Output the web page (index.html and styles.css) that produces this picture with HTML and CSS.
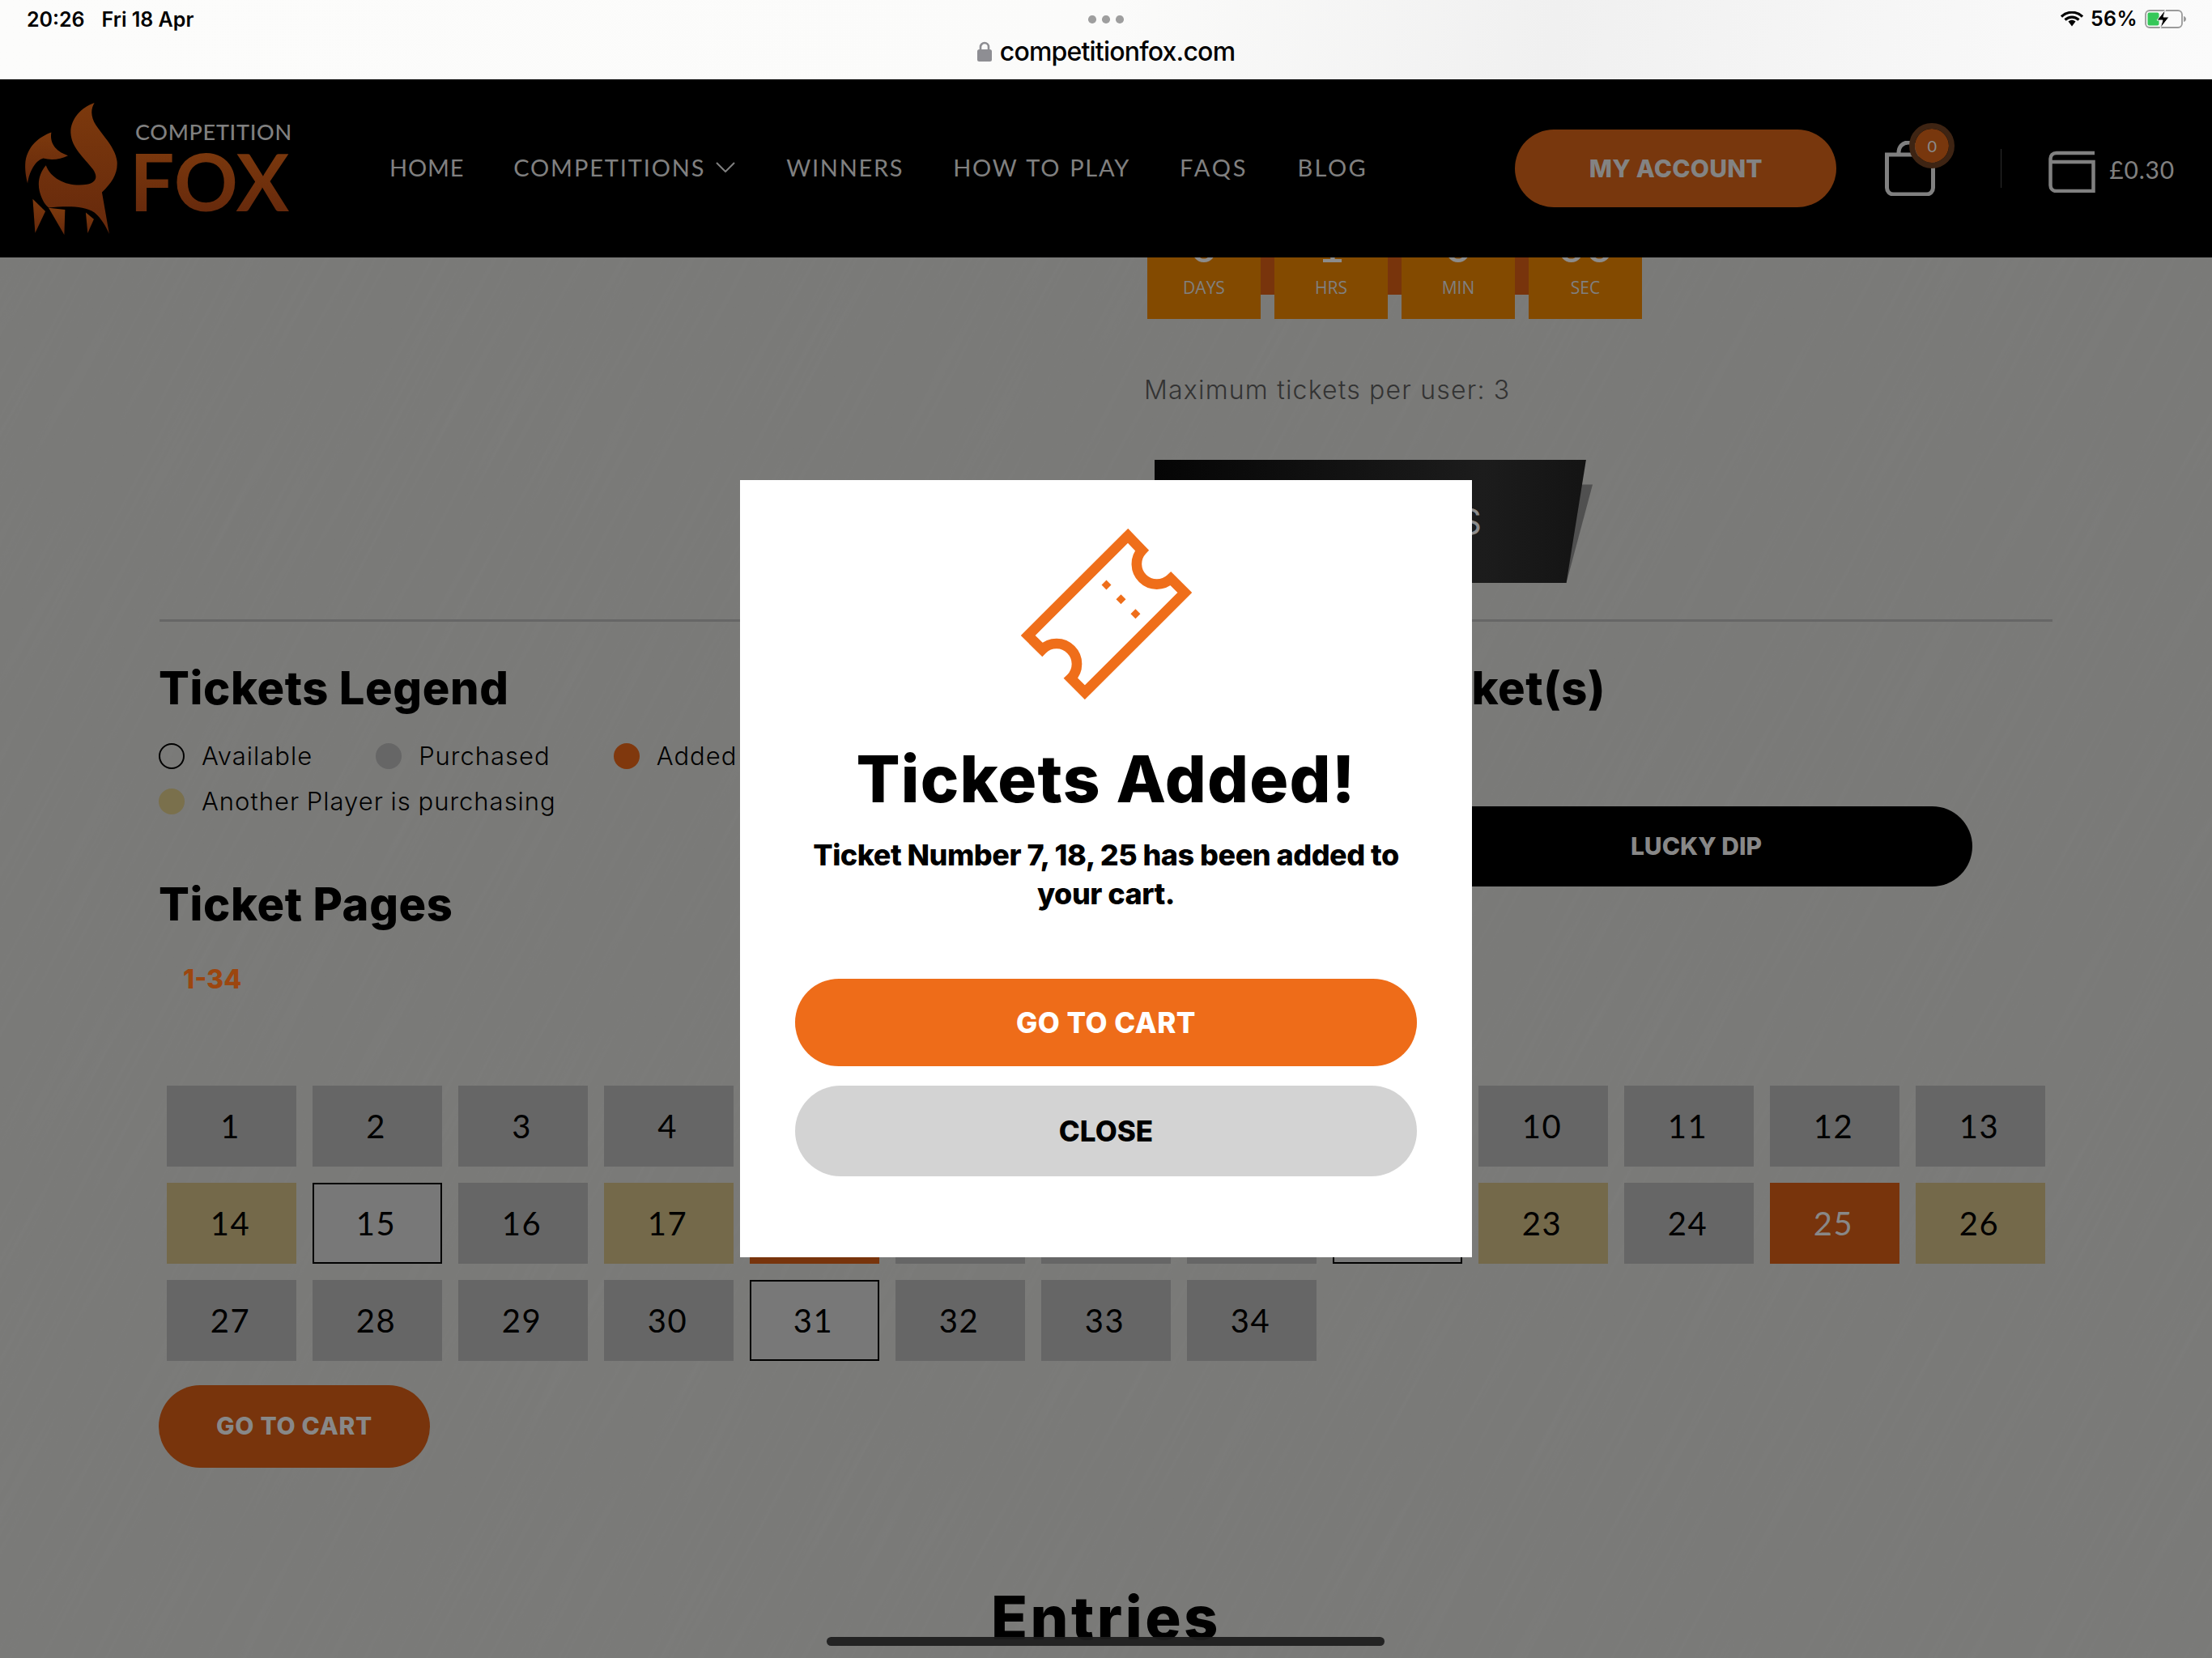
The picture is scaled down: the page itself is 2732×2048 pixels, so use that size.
FILE: index.html
```html
<!DOCTYPE html>
<html lang="en">
<head>
<meta charset="utf-8">
<title>Competition Fox</title>
<link rel="stylesheet" href="styles.css">
</head>
<body>
<div class="page">
  <div class="status">
    <div class="status-left"><span>20:26</span><span>Fri 18 Apr</span></div>
    <div class="status-mid">
      <div class="dots"><i></i><i></i><i></i></div>
      <div class="url">
        <svg class="lock" viewBox="0 0 18 25"><path d="M4 11V7a5 5 0 0 1 10 0v4" fill="none" stroke="#8e8e93" stroke-width="2.6"/><rect x="0" y="10" width="18" height="15" rx="2.5" fill="#8e8e93"/></svg>
        <span>competitionfox.com</span>
      </div>
    </div>
    <div class="status-right">
      <svg class="wifi" viewBox="0 0 28 19"><path d="M1 6.500C8.500-.5 19.500-.5 27 6.500M5.500 10.500c5-4.500 12-4.500 17 0" fill="none" stroke="#000" stroke-width="3.200"/><path d="M9.500 12.500c3-2.500 6-2.500 9 0L14 18.500z" fill="#000"/></svg>
      <span class="pct">56%</span>
      <svg class="battery" viewBox="0 0 52 23"><rect x="1" y="1" width="45" height="21" rx="5" fill="none" stroke="#9a9a9a" stroke-width="1.800"/><rect x="3.500" y="3.500" width="14" height="16" rx="2" fill="#35c759"/><path d="M48 8c2 .5 3 2 3 3.500S50 14.500 48 15z" fill="#9a9a9a"/><path d="M25.500 0 15 13h7l-3 10 11-14h-7l2.500-9z" fill="#000" stroke="#f5f5f5" stroke-width="1"/></svg>
    </div>
  </div>

  <header class="site-header">
    <a class="logo">
      <svg class="logo-mark" viewBox="30 48 345 490">
        <defs><linearGradient id="flame" x1="0" y1="0" x2="0" y2="1"><stop offset="0" stop-color="#7c390d"/><stop offset="1" stop-color="#66290c"/></linearGradient></defs>
        <g fill="url(#flame)">
          <path d="M290 48C240 65 200 110 202 160C205 215 250 250 285 295C305 325 295 345 262 351C200 362 130 335 110 280C88 305 78 340 86 375C92 400 104 425 120 437C180 432 250 428 290 455C315 475 335 510 345 535L318 380C355 345 378 310 374 265C368 215 325 175 295 130C278 102 274 75 290 48Z"/>
          <path d="M130 158C85 175 45 205 34 265C31 295 36 325 42 347C48 305 70 262 100 254C130 262 165 258 192 244C155 232 122 205 130 158Z"/>
          <path d="M61 405 108 451 70 531Z"/>
          <path d="M120 438 181 445 178 538Z"/>
          <path d="M258 455 288 480 265 532Z"/>
        </g>
      </svg>
      <span class="logo-text"><span class="logo-top">COMPETITION</span><span class="logo-fox">FOX</span></span>
    </a>
    <nav class="nav">
      <a class="nav-home">HOME</a>
      <a class="has-sub">COMPETITIONS<svg class="chev" viewBox="0 0 24 13"><path d="M1 1l11 11L23 1" fill="none" stroke="#808080" stroke-width="2"/></svg></a>
      <a>WINNERS</a>
      <a>HOW TO PLAY</a>
      <a class="nav-faqs">FAQS</a>
      <a class="nav-blog">BLOG</a>
    </nav>
    <a class="account">MY ACCOUNT</a>
    <div class="cart">
      <svg class="bag" viewBox="0 0 62 68"><path d="M2.500 17v41a8 8 0 0 0 8 8h41a8 8 0 0 0 8-8V17zM17 17v-2c0-8 5-13 12-13s11 5 11 13" fill="none" stroke="#808080" stroke-width="5"/></svg>
      <span class="badge">0</span>
    </div>
    <span class="divider"></span>
    <svg class="wallet" viewBox="0 0 58 53"><path d="M57 4H10C5 4 2.500 7 2.500 11v33c0 4 3 7 7 7h46V15H3" fill="none" stroke="#808080" stroke-width="4.500"/></svg>
    <span class="balance">£0.30</span>
  </header>

  <main class="content">
    <svg class="texture" aria-hidden="true">
      <filter id="scratch" x="0" y="0" width="100%" height="100%">
        <feTurbulence type="fractalNoise" baseFrequency="0.004 0.16" numOctaves="3" seed="4"/>
        <feColorMatrix type="matrix" values="0 0 0 0 0.25  0 0 0 0 0.25  0 0 0 0 0.25  1.6 0 0 0 -0.72"/>
      </filter>
      <rect x="-1500" y="-1500" width="5000" height="5000" filter="url(#scratch)" transform="rotate(-62 1366 860)"/>
    </svg>

    <div class="countdown">
      <div class="cd-box"><b>0</b><span>DAYS</span></div>
      <div class="cd-box"><b>1</b><span>HRS</span></div>
      <div class="cd-box"><b>0</b><span>MIN</span></div>
      <div class="cd-box"><b>00</b><span>SEC</span></div>
    </div>
    <p class="max">Maximum tickets per user: 3</p>
    <div class="enter-wrap"><div class="enter">ENTER TICKETS</div></div>
    <div class="rule"></div>

    <div class="columns">
      <section class="col-left">
        <h2 class="heading">Tickets Legend</h2>
        <ul class="legend">
          <li><i class="dot dot-open"></i>Available</li>
          <li><i class="dot dot-gray"></i>Purchased</li>
          <li><i class="dot dot-orange"></i>Added</li>
          <li class="legend-wide"><i class="dot dot-gold"></i>Another Player is purchasing</li>
        </ul>
        <h2 class="heading pages-heading">Ticket Pages</h2>
        <a class="page-tab">1-34</a>
      </section>
      <section class="col-right">
        <h2 class="heading heading-end">Select Ticket(s)</h2>
        <a class="lucky">LUCKY DIP</a>
      </section>
    </div>

    <div class="tickets">
      <span class="t">1</span><span class="t">2</span><span class="t">3</span><span class="t">4</span><span class="t">5</span><span class="t">6</span><span class="t t-added">7</span><span class="t">8</span><span class="t">9</span><span class="t">10</span><span class="t">11</span><span class="t">12</span><span class="t">13</span>
      <span class="t t-gold">14</span><span class="t t-free">15</span><span class="t">16</span><span class="t t-gold">17</span><span class="t t-added">18</span><span class="t">19</span><span class="t">20</span><span class="t">21</span><span class="t t-free">22</span><span class="t t-gold">23</span><span class="t">24</span><span class="t t-added">25</span><span class="t t-gold">26</span>
      <span class="t">27</span><span class="t">28</span><span class="t">29</span><span class="t">30</span><span class="t t-free">31</span><span class="t">32</span><span class="t">33</span><span class="t">34</span>
    </div>
    <a class="cart-btn">GO TO CART</a>
    <h2 class="entries">Entries</h2>
  </main>

  <div class="modal">
    <svg class="ticket-icon" viewBox="181 100 634 633">
      <path d="M578 126 630 180A75 75 0 0 0 737 285L789 337 418 707 366 655A75 75 0 0 0 260 548L207 496Z" fill="none" stroke="#ef6e1a" stroke-width="38"/>
      <path d="M498 290l18 18-18 18-18-18zM552 344l18 18-18 18-18-18zM606 398l18 18-18 18-18-18z" fill="#ef6e1a"/>
    </svg>
    <h1 class="modal-title">Tickets Added!</h1>
    <p class="modal-text">Ticket Number 7, 18, 25 has been added to<br>your cart.</p>
    <a class="modal-btn modal-go">GO TO CART</a>
    <a class="modal-btn modal-close">CLOSE</a>
  </div>

  <div class="home-bar"></div>
</div>
</body>
</html>
```

FILE: styles.css
```css
* { box-sizing: border-box; }
html, body { margin: 0; padding: 0; }
body { font-family: "Inter", "Liberation Sans", sans-serif; color: #000; background: #787878; }
.page { position: relative; width: 2732px; height: 2048px; overflow: hidden; display: flex; flex-direction: column; }

/* status bar */
.status { height: 98px; flex: none; display: grid; grid-template-columns: 1fr auto 1fr; background: linear-gradient(100deg, #fcfcfb 0%, #fbfbfa 50%, #f0f0f0 70%, #f6f6f6 85%, #fbfbfb 100%); }
.status-left { display: flex; gap: 21px; padding: 10px 0 0 33px; font-size: 25px; line-height: 29px; font-weight: 600; }
.status-mid { display: flex; flex-direction: column; align-items: center; }
.dots { display: flex; gap: 7.500px; padding-top: 19px; }
.dots i { width: 9.500px; height: 9.500px; border-radius: 50%; background: #9e9e9e; }
.url { display: flex; align-items: center; gap: 10px; margin-top: 15px; font-size: 32px; line-height: 40px; font-weight: 500; letter-spacing: -0.8px; }
.lock { width: 18px; height: 25px; }
.status-right { display: flex; justify-content: flex-end; align-items: flex-start; padding: 12px 31px 0 0; }
.wifi { width: 28px; height: 19px; margin: 2px 9px 0 0; }
.pct { font-size: 25px; line-height: 29px; font-weight: 600; letter-spacing: 0.4px; margin-right: 9px; margin-top: -3px; }
.battery { width: 52px; height: 23px; }

/* site header */
.site-header { position: relative; z-index: 2; height: 220px; flex: none; background: #000; display: flex; align-items: center; padding-left: 30px; }
.logo { display: flex; align-items: center; gap: 22px; width: 451px; flex: none; }
.logo-mark { width: 115px; height: 163px; }
.logo-text { display: flex; flex-direction: column; margin-bottom: 3px; font-family: "Lato", sans-serif; }
.logo-top { font-size: 27px; line-height: 30px; margin-bottom: 3px; font-weight: 500; color: #808080; letter-spacing: 0.7px; }
.logo-fox { font-size: 98px; line-height: 84px; margin-left: -7px; font-weight: 700; letter-spacing: 0; background: linear-gradient(#7c390d, #66290c); -webkit-background-clip: text; background-clip: text; color: transparent; }
.nav { display: flex; align-items: center; gap: 61px; margin-top: -3px; font-family: "Lato", sans-serif; font-weight: 400; font-size: 29px; letter-spacing: 1.700px; word-spacing: 2px; color: #808080; flex: none; }
.nav-home { letter-spacing: 0.8px; }
.nav-faqs { letter-spacing: 2.900px; }
.nav-blog { letter-spacing: 2.400px; }
.has-sub { display: flex; align-items: center; gap: 13px; margin-right: 2px; letter-spacing: 1.850px; }
.chev { width: 24px; height: 13px; }
.account { margin-left: auto; width: 397px; height: 96px; border-radius: 48px; background: #78370d; color: #838383; font-family: "Inter", sans-serif; font-weight: 800; font-size: 30px; letter-spacing: 0.2px; display: flex; align-items: center; justify-content: center; }
.cart { position: relative; width: 62px; height: 68px; margin: 0 0 0 60px; flex: none; }
.bag { display: block; width: 62px; height: 68px; }
.badge { position: absolute; left: 30px; top: -22px; width: 56px; height: 56px; border-radius: 50%; background: #78370d; border: 7px solid #3e2413; background-clip: padding-box; color: #8a8a8a; font-size: 20px; display: flex; align-items: center; justify-content: center; font-family: "Lato", sans-serif; }
.divider { width: 1px; height: 48px; background: #2c2c2c; margin: 0 58px 0 81px; flex: none; }
.wallet { width: 58px; height: 53px; margin-top: 7px; flex: none; }
.balance { font-family: "Lato", sans-serif; font-weight: 400; font-size: 30px; color: #808080; margin: 1px 46px 0 17px; letter-spacing: 0.8px; }

/* page content */
.content { position: relative; flex: 1; padding-left: 197px; background: #7a7a78; }
.texture { position: absolute; left: 0; top: 0; width: 100%; height: 100%; opacity: 0.2; }
.content > * { position: relative; }
.content > .texture { position: absolute; }
.countdown { display: flex; gap: 17px; width: max-content; margin: -60px 0 0 1220px; background: linear-gradient(#78340c, #78340c) no-repeat top / 100% calc(100% - 30px); }
.cd-box { width: 140px; height: 136px; background: #834a00; color: #808080; display: flex; flex-direction: column; align-items: center; font-size: 21px; }
.cd-box b { font-family: "Lato", sans-serif; font-weight: 400; font-size: 60px; line-height: 60px; padding-top: 13px; height: 84px; color: #8c8c8c; }
.cd-box span { line-height: 26px; font-family: "Open Sans", sans-serif; font-weight: 400; }
.max { margin: 64px 0 0 1216px; font-size: 32px; line-height: 48px; font-weight: 300; letter-spacing: 1.2px; color: #333; }
.enter-wrap { position: relative; width: 541px; height: 152px; margin: 62px 0 0 1229px; }
.enter-wrap::before { content: ""; position: absolute; inset: 0; background: #505050; clip-path: polygon(0 20%, 100% 20%, 94% 100%, 0 100%); }
.enter { position: absolute; inset: 0; background: linear-gradient(90deg, #050505, #1c1c1c 75%, #131313); clip-path: polygon(0 0, 98.500% 0, 94% 100%, -3% 100%); color: #8c8c8c; font-size: 44px; font-weight: 400; white-space: nowrap; display: flex; align-items: center; justify-content: flex-end; padding-right: 137px; }
.rule { height: 3px; width: 2338px; margin-top: 45px; background: #666; }

.columns { display: grid; grid-template-columns: 1216px 1fr; }
.heading { margin: 0 0 0 -1px; font-size: 56px; line-height: 80px; font-weight: 800; letter-spacing: 0.6px; }
.col-left .heading, .col-right .heading { padding-top: 42px; height: 122px; }
.heading-end { display: flex; justify-content: flex-end; width: 571px; white-space: nowrap; }
.legend { list-style: none; margin: 28px 0 0 -1px; padding: 0; display: flex; flex-wrap: wrap; width: 760px; column-gap: 78px; row-gap: 24px; font-size: 31px; letter-spacing: 1px; word-spacing: -1px; font-weight: 300; line-height: 32px; }
.legend li { display: flex; align-items: center; gap: 21px; }
.legend-wide { flex-basis: 100%; }
.dot { width: 32px; height: 32px; border-radius: 50%; flex: none; }
.dot-open { border: 2px solid #000; }
.dot-gray { background: #666; }
.dot-orange { background: #80380d; }
.dot-gold { background: #7a704c; }
.col-left .pages-heading { margin-top: 61px; height: 90px; padding-top: 10px; }
.page-tab { display: block; margin: 33px 0 0 29px; font-size: 32px; line-height: 40px; font-weight: 800; color: #9c460f; }
.lucky { display: flex; align-items: center; justify-content: center; width: 682px; height: 99px; padding-bottom: 2px; margin: 106px 0 0 341px; background: #000; border-radius: 50px; color: #888; font-weight: 800; font-size: 30px; }

.tickets { display: grid; grid-template-columns: repeat(13, 160px); grid-auto-rows: 100px; gap: 20px; margin: 111px 0 0 9px; }
.t { background: #666; display: flex; align-items: center; justify-content: center; padding-right: 3px; font-family: "Lato", sans-serif; font-weight: 400; font-size: 40px; letter-spacing: 1.5px; }
.t-gold { background: #74694a; }
.t-added { background: #78340c; color: #888; }
.t-free { background: #787878; border: 2px solid #000; }
.cart-btn { display: flex; align-items: center; justify-content: center; width: 335px; height: 102px; padding-bottom: 2px; margin: 30px 0 0 -1px; border-radius: 51px; background: #78340c; color: #888; font-weight: 800; font-size: 30px; letter-spacing: 0.7px; }
.entries { margin: 145px 0 0 -197px; width: 2732px; text-align: center; font-size: 74px; line-height: 80px; font-weight: 800; letter-spacing: 3.5px; }

/* modal */
.modal { position: absolute; z-index: 3; left: 914px; top: 593px; width: 904px; height: 960px; background: #fff; display: flex; flex-direction: column; align-items: center; padding-top: 60px; }
.ticket-icon { width: 211px; height: 211px; flex: none; }
.modal-title { margin: 48px 0 0; font-size: 80px; line-height: 100px; font-weight: 800; letter-spacing: 1.2px; }
.modal-text { margin: 20px 0 0; font-size: 36px; line-height: 48px; font-weight: 800; letter-spacing: -0.5px; text-align: center; }
.modal-btn { display: flex; align-items: center; justify-content: center; width: 768px; font-size: 35px; font-weight: 800; border-radius: 56px; }
.modal-go { height: 108px; margin-top: 81px; background: #ee6c19; color: #fff; letter-spacing: 0.5px; }
.modal-close { height: 112px; margin-top: 24px; background: #d3d3d3; color: #000; }

.home-bar { position: absolute; z-index: 4; left: 1021px; top: 2022px; width: 689px; height: 11px; border-radius: 6px; background: rgba(30, 30, 30, 0.94); }
```
